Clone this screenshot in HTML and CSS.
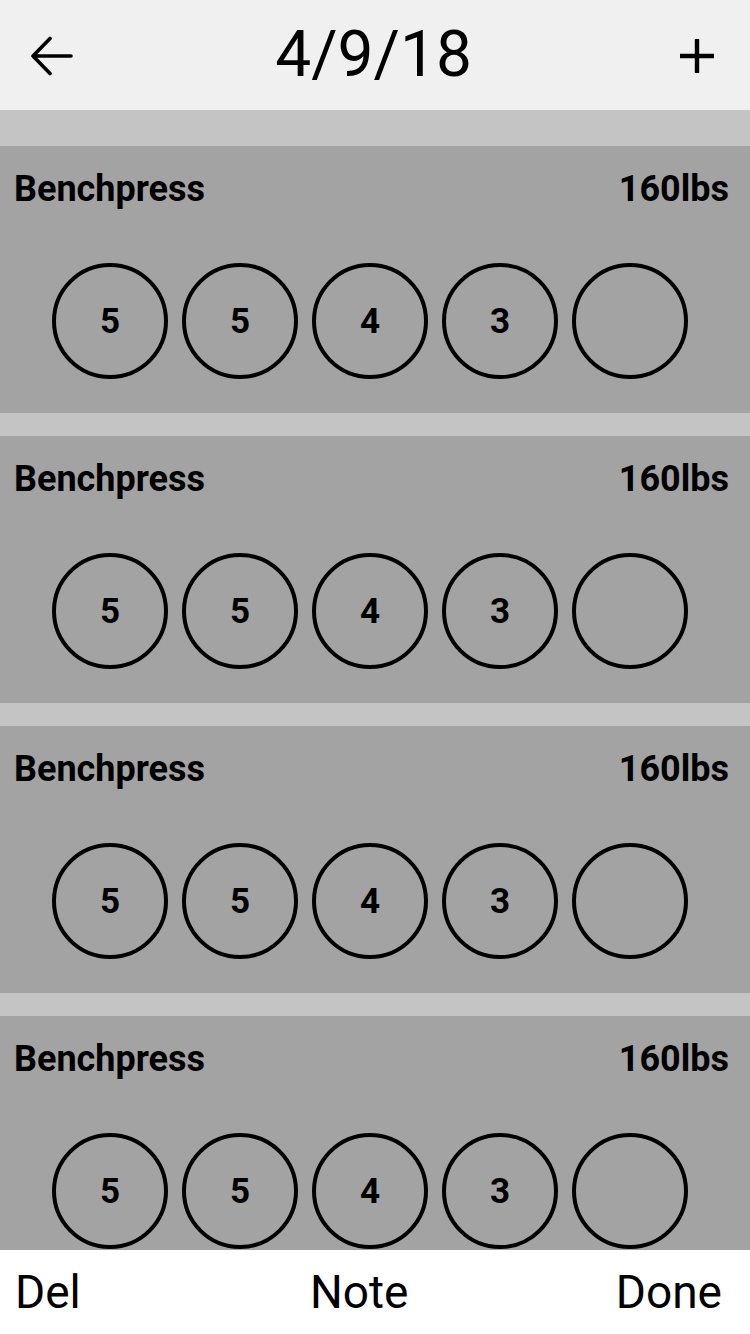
FILE: index.html
```html
<!DOCTYPE html>
<html lang="en">
<head>
  <meta charset="UTF-8">
  <meta name="viewport" content="width=device-width, initial-scale=1.0">
  <title>4/9/18 - Workout</title>
  <link rel="stylesheet" href="styles.css">
</head>
<body>
  <div class="app">
    <div class="topbar">
      <button class="icon-btn back-btn" aria-label="Back">
        <svg width="44" height="40" viewBox="0 0 44 40">
          <path d="M4 20 H42 M4 20 L21 2.5 M4 20 L21 37.5" fill="none" stroke="#000" stroke-width="3.6" stroke-linecap="round" stroke-linejoin="round"/>
        </svg>
      </button>
      <h1 class="title">4/9/18</h1>
      <button class="icon-btn add-btn" aria-label="Add">
        <svg width="34" height="34" viewBox="0 0 34 34">
          <path d="M17 0 V34 M0 17 H34" fill="none" stroke="#000" stroke-width="4.4"/>
        </svg>
      </button>
    </div>

    <div class="exercise-list">
      <div class="exercise">
        <div class="exercise-header">
          <span class="exercise-name">Benchpress</span>
          <span class="exercise-weight">160lbs</span>
        </div>
        <div class="sets">
          <div class="set">5</div>
          <div class="set">5</div>
          <div class="set">4</div>
          <div class="set">3</div>
          <div class="set"></div>
        </div>
      </div>
      <div class="exercise">
        <div class="exercise-header">
          <span class="exercise-name">Benchpress</span>
          <span class="exercise-weight">160lbs</span>
        </div>
        <div class="sets">
          <div class="set">5</div>
          <div class="set">5</div>
          <div class="set">4</div>
          <div class="set">3</div>
          <div class="set"></div>
        </div>
      </div>
      <div class="exercise">
        <div class="exercise-header">
          <span class="exercise-name">Benchpress</span>
          <span class="exercise-weight">160lbs</span>
        </div>
        <div class="sets">
          <div class="set">5</div>
          <div class="set">5</div>
          <div class="set">4</div>
          <div class="set">3</div>
          <div class="set"></div>
        </div>
      </div>
      <div class="exercise">
        <div class="exercise-header">
          <span class="exercise-name">Benchpress</span>
          <span class="exercise-weight">160lbs</span>
        </div>
        <div class="sets">
          <div class="set">5</div>
          <div class="set">5</div>
          <div class="set">4</div>
          <div class="set">3</div>
          <div class="set"></div>
        </div>
      </div>
    </div>

    <div class="bottombar">
      <button class="text-btn">Del</button>
      <button class="text-btn note-btn">Note</button>
      <button class="text-btn">Done</button>
    </div>
  </div>
</body>
</html>
```

FILE: styles.css
```css
body {
  margin: 0;
  font-family: Roboto, "Liberation Sans", sans-serif;
  color: #000;
}
.app {
  width: 750px;
  height: 1334px;
  display: flex;
  flex-direction: column;
  overflow: hidden;
}
button {
  background: none;
  border: none;
  padding: 0;
  margin: 0;
  font-family: inherit;
  color: #000;
  cursor: pointer;
}
.topbar {
  height: 110px;
  flex-shrink: 0;
  background-color: #f0f0f0;
  display: flex;
  align-items: center;
  justify-content: space-between;
  padding: 0 36px 0 29px;
}
.icon-btn {
  display: flex;
  align-items: center;
  justify-content: center;
}
.back-btn {
  margin-top: 1px;
}
.add-btn {
  margin-top: 1px;
}
.title {
  margin: 0 6px 0 0;
  font-size: 64px;
  font-weight: 400;
  line-height: 1;
}
.exercise-list {
  flex: 1;
  overflow: hidden;
  background-color: #c4c4c4;
  padding-top: 36px;
  display: flex;
  flex-direction: column;
  gap: 23px;
}
.exercise {
  flex-shrink: 0;
  height: 267px;
  background-color: #a3a3a3;
  box-sizing: border-box;
  padding: 23px 21px 0 14px;
}
.exercise-header {
  display: flex;
  justify-content: space-between;
  align-items: baseline;
  font-size: 36px;
  font-weight: 700;
  line-height: 40px;
}
.sets {
  display: flex;
  gap: 14px;
  margin-top: 54px;
  padding-left: 38px;
}
.set {
  width: 116px;
  height: 116px;
  box-sizing: border-box;
  border: 4px solid #000;
  border-radius: 50%;
  display: flex;
  align-items: center;
  justify-content: center;
  font-size: 35px;
  font-weight: 700;
}
.bottombar {
  height: 84px;
  flex-shrink: 0;
  background-color: #fff;
  display: flex;
  align-items: center;
  justify-content: space-between;
  padding: 0 28px 0 15px;
}
.text-btn {
  font-size: 46px;
  font-weight: 400;
  line-height: 1;
}
.note-btn {
  margin-left: 22px;
}
```
